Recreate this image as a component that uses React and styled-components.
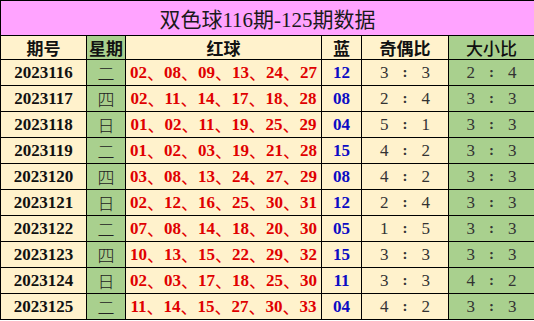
import React from 'react';
import styled, { createGlobalStyle } from 'styled-components';

const GlobalStyle = createGlobalStyle`
  html, body {
    margin: 0;
    padding: 0;
    background: #fff;
  }
`;

const PINK = '#ffa3ff';
const CREAM = '#fff2cc';
const GREEN = '#a9d08e';

const Table = styled.table`
  width: 534px;
  border-collapse: collapse;
  table-layout: fixed;
  font-family: "Liberation Serif", "Noto Sans CJK SC", serif;
  color: #111;

  td, th {
    border: 1px solid #000;
    padding: 0;
    text-align: center;
    white-space: nowrap;
    overflow: hidden;
  }
`;

const TitleCell = styled.th`
  background: ${PINK};
  font-size: 21px;
  font-weight: 400;
  color: #1a1a1a;
`;

const HeadCell = styled.th`
  background: ${p => (p.$green ? GREEN : CREAM)};
  font-family: "Noto Sans CJK SC", sans-serif;
  font-size: 17px;
  font-weight: ${p => (p.$light ? 500 : 700)};
`;

const Cell = styled.td`
  background: ${p => (p.$green ? GREEN : CREAM)};
  font-size: 17px;
`;

// fixed-height box so CJK glyph metrics don't stretch the rows
const Box = styled.div`
  height: ${p => p.$h}px;
  display: flex;
  align-items: center;
  justify-content: center;
  gap: ${p => p.$gap || 0}px;
  overflow: hidden;
`;

const DateCell = styled(Cell)`
  font-weight: 700;
  color: #111;
`;

const WeekCell = styled(Cell)`
  font-family: "Noto Sans CJK SC", sans-serif;
  font-weight: 300;
  color: #222;
`;

const RedCell = styled(Cell)`
  font-weight: 700;
  color: #e00000;
`;

const Sep = styled.span`
  font-family: "Noto Sans CJK SC", sans-serif;
  font-weight: 400;
  font-size: 17px;
  line-height: 1;
`;

const BlueCell = styled(Cell)`
  font-weight: 700;
  color: #0c0cc4;
`;

const RatioCell = styled(Cell)`
  color: #333;
`;

const Colon = styled.span`
  width: 17px;
  font-weight: 700;
  font-size: 15px;
  text-align: center;
  color: #333;
`;

const rows = [
  ['2023116', '二', ['02', '08', '09', '13', '24', '27'], '12', [3, 3], [2, 4]],
  ['2023117', '四', ['02', '11', '14', '17', '18', '28'], '08', [2, 4], [3, 3]],
  ['2023118', '日', ['01', '02', '11', '19', '25', '29'], '04', [5, 1], [3, 3]],
  ['2023119', '二', ['01', '02', '03', '19', '21', '28'], '15', [4, 2], [3, 3]],
  ['2023120', '四', ['03', '08', '13', '24', '27', '29'], '08', [4, 2], [3, 3]],
  ['2023121', '日', ['02', '12', '16', '25', '30', '31'], '12', [2, 4], [3, 3]],
  ['2023122', '二', ['07', '08', '14', '18', '20', '30'], '05', [1, 5], [3, 3]],
  ['2023123', '四', ['10', '13', '15', '22', '29', '32'], '15', [3, 3], [3, 3]],
  ['2023124', '日', ['02', '03', '17', '18', '25', '30'], '11', [3, 3], [4, 2]],
  ['2023125', '二', ['11', '14', '15', '27', '30', '33'], '04', [4, 2], [3, 3]],
];

const RatioView = ({ pair }) => (
  <Box $h={25} $gap={8}>
    <span>{pair[0]}</span>
    <Colon>:</Colon>
    <span>{pair[1]}</span>
  </Box>
);

const Balls = ({ list }) => (
  <Box $h={25}>
    {list.map((n, i) => (
      <React.Fragment key={i}>
        {i > 0 && <Sep>、</Sep>}
        <span>{n}</span>
      </React.Fragment>
    ))}
  </Box>
);

export default function App() {
  return (
    <>
      <GlobalStyle />
      <Table>
        <colgroup>
          <col style={{ width: 86 }} />
          <col style={{ width: 39 }} />
          <col style={{ width: 196 }} />
          <col style={{ width: 40 }} />
          <col style={{ width: 87 }} />
          <col style={{ width: 86 }} />
        </colgroup>
        <thead>
          <tr>
            <TitleCell colSpan={6}><Box $h={34}>双色球116期-125期数据</Box></TitleCell>
          </tr>
          <tr>
            <HeadCell><Box $h={23}>期号</Box></HeadCell>
            <HeadCell $green><Box $h={23}>星期</Box></HeadCell>
            <HeadCell><Box $h={23}>红球</Box></HeadCell>
            <HeadCell><Box $h={23}>蓝</Box></HeadCell>
            <HeadCell><Box $h={23}>奇偶比</Box></HeadCell>
            <HeadCell $green $light><Box $h={23}>大小比</Box></HeadCell>
          </tr>
        </thead>
        <tbody>
          {rows.map(r => (
            <tr key={r[0]}>
              <DateCell><Box $h={25}>{r[0]}</Box></DateCell>
              <WeekCell $green><Box $h={25}>{r[1]}</Box></WeekCell>
              <RedCell><Balls list={r[2]} /></RedCell>
              <BlueCell><Box $h={25}>{r[3]}</Box></BlueCell>
              <RatioCell><RatioView pair={r[4]} /></RatioCell>
              <RatioCell $green><RatioView pair={r[5]} /></RatioCell>
            </tr>
          ))}
        </tbody>
      </Table>
    </>
  );
}
